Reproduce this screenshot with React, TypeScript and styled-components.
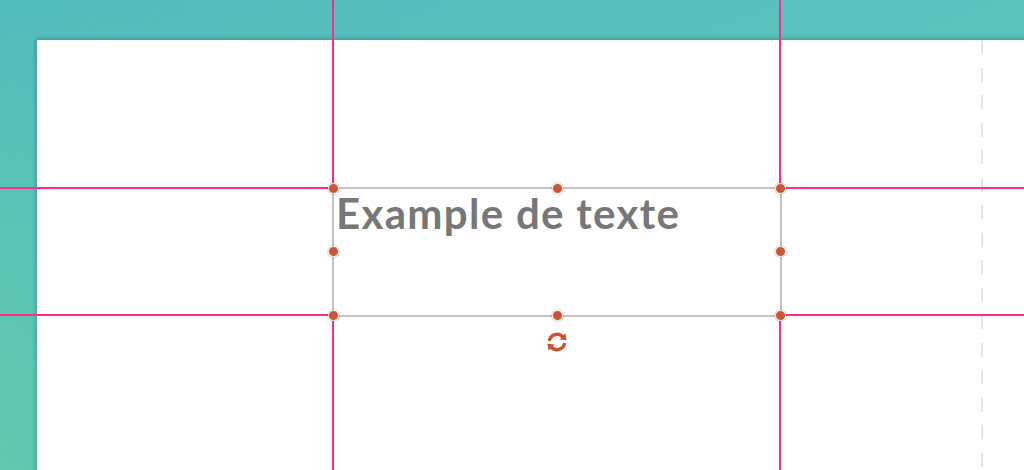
import React from 'react';
import styled, { createGlobalStyle } from 'styled-components';

const GlobalStyle = createGlobalStyle`
  html, body {
    margin: 0;
    padding: 0;
    width: 1024px;
    height: 470px;
    overflow: hidden;
  }
  body {
    font-family: 'Lato', 'Liberation Sans', sans-serif;
  }
`;

const Workspace = styled.div`
  position: relative;
  width: 1024px;
  height: 470px;
  overflow: hidden;
  box-sizing: border-box;
  padding: 40px 0 0 37px;
  background: linear-gradient(160deg, #52bcbc 0%, #5bc2bc 45%, #62c4c6 100%);

  &::before {
    content: '';
    position: absolute;
    inset: 0;
    background: linear-gradient(90deg, rgba(96, 202, 172, 0.9) 0%, rgba(96, 202, 172, 0) 40%);
    mask-image: linear-gradient(180deg, transparent 0%, #000 100%);
    pointer-events: none;
  }
`;

const Page = styled.div`
  position: relative;
  z-index: 1;
  width: 1100px;
  height: 500px;
  background: #ffffff;
  box-shadow: -1px -1px 4px rgba(0, 60, 60, 0.35);
`;

const MarginLine = styled.div`
  position: absolute;
  top: 0;
  left: 944px;
  width: 2px;
  height: 100%;
  background: repeating-linear-gradient(
    180deg,
    #e6e6e6 0px,
    #e6e6e6 14px,
    transparent 14px,
    transparent 27.5px
  );
`;

const Guide = styled.div<{ $vertical?: boolean; $at: number }>`
  position: absolute;
  z-index: 2;
  background: #ff2a8e;
  ${p =>
    p.$vertical
      ? `left: ${p.$at}px; top: 0; width: 2px; height: 470px;`
      : `top: ${p.$at}px; left: 0; height: 2px; width: 1024px;`}
`;

const TextBox = styled.div`
  position: absolute;
  z-index: 3;
  left: 332px;
  top: 187px;
  width: 450px;
  height: 130px;
  box-sizing: border-box;
  border: 2px solid #c2c2c2;
  background: #ffffff;
`;

const SampleText = styled.div`
  padding-left: 2px;
  margin-top: -3px;
  font-family: 'Lato', 'Liberation Sans', sans-serif;
  font-weight: 700;
  font-size: 42px;
  line-height: 54px;
  color: #777777;
  letter-spacing: 1.3px;
  white-space: nowrap;
`;

const Handle = styled.span<{ $x: number; $y: number }>`
  position: absolute;
  left: ${p => p.$x}px;
  top: ${p => p.$y}px;
  width: 11px;
  height: 11px;
  margin: -5px 0 0 -5px;
  box-sizing: border-box;
  border-radius: 50%;
  background: #cc5634;
  border: 1.5px solid #ffffff;
  box-shadow: 0 0 2px rgba(0, 0, 0, 0.35);
`;

const RotateHandle = styled.div`
  position: absolute;
  left: 211px;
  top: 141px;
  width: 24px;
  height: 24px;
  display: flex;
  align-items: center;
  justify-content: center;
`;

const handles: [number, number][] = [
  [-1, -1], [223, -1], [446, -1],
  [-1, 62], [446, 62],
  [-1, 126], [223, 126], [446, 126],
];

const RotateIcon = () => (
  <svg width="24" height="24" viewBox="0 0 24 24" fill="none">
    <path d="M4.3 11 A7.8 7.8 0 0 1 18.2 7.4" stroke="#d1502e" strokeWidth="3.4" />
    <path d="M14.6 9.4 L21.6 10.2 L20.4 3.2 Z" fill="#d1502e" />
    <path d="M19.7 13 A7.8 7.8 0 0 1 5.8 16.6" stroke="#d1502e" strokeWidth="3.4" />
    <path d="M9.4 14.6 L2.4 13.8 L3.6 20.8 Z" fill="#d1502e" />
  </svg>
);

export default function App() {
  return (
    <>
      <GlobalStyle />
      <Workspace>
        <Page>
          <MarginLine />
        </Page>
        <Guide $vertical $at={332} />
        <Guide $vertical $at={779} />
        <Guide $at={187} />
        <Guide $at={314} />
        <TextBox>
          <SampleText>Example de texte</SampleText>
          {handles.map(([x, y], i) => (
            <Handle key={i} $x={x} $y={y} />
          ))}
          <RotateHandle>
            <RotateIcon />
          </RotateHandle>
        </TextBox>
      </Workspace>
    </>
  );
}
